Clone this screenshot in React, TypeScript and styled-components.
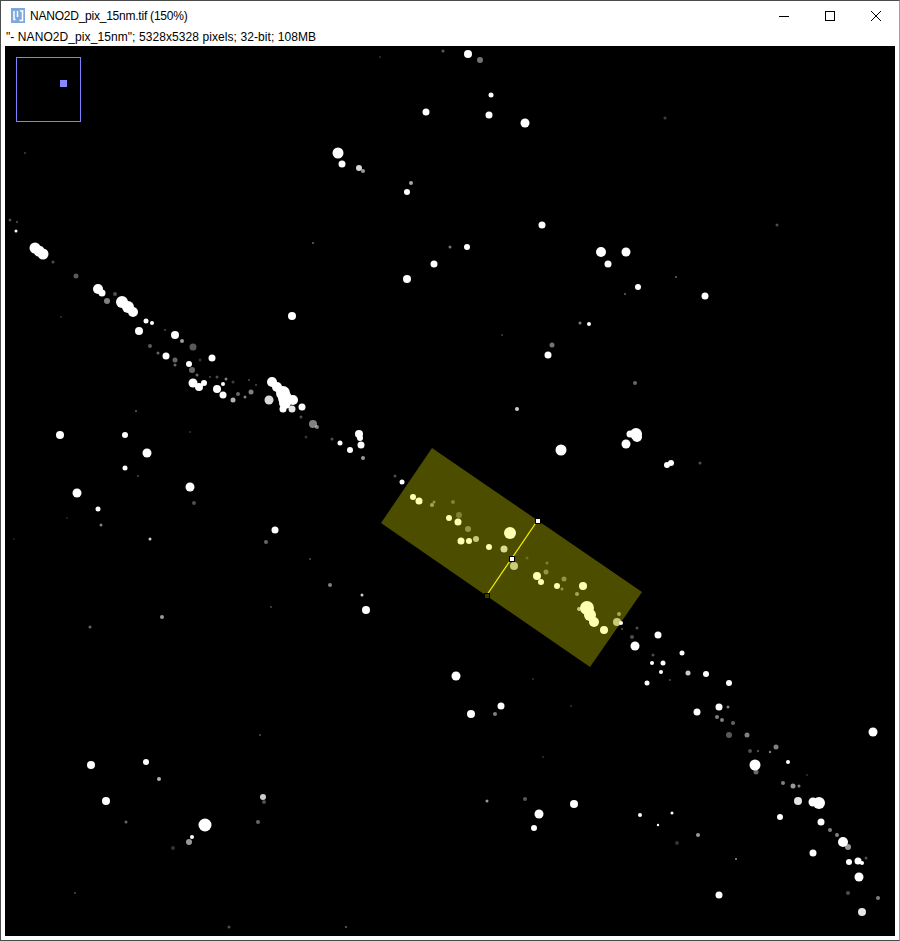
import styled, { createGlobalStyle } from 'styled-components';

const GlobalStyle = createGlobalStyle`
  html, body {
    margin: 0;
    padding: 0;
    background: #fff;
  }
`;

const Window = styled.div`
  box-sizing: border-box;
  width: 900px;
  height: 941px;
  display: flex;
  flex-direction: column;
  background: #fff;
  border: 1px solid #4c4c4c;
  border-right-color: #a0a0a0;
  font-family: 'Liberation Sans', Arial, sans-serif;
  color: #000;
  overflow: hidden;
`;

const TitleBar = styled.div`
  display: flex;
  align-items: center;
  height: 29px;
  flex: none;
`;

const AppIcon = styled.svg`
  width: 16px;
  height: 16px;
  margin: 0 4px 0 9px;
  flex: none;
`;

const Title = styled.div`
  flex: 1;
  font-size: 12px;
  letter-spacing: -0.23px;
  white-space: nowrap;
`;

const WindowButton = styled.div`
  width: 46px;
  height: 29px;
  display: flex;
  align-items: center;
  justify-content: center;
`;

const ButtonGlyph = styled.svg`
  width: 12px;
  height: 12px;
  stroke: #000;
  fill: none;
`;

const StatusLine = styled.div`
  flex: none;
  height: 16px;
  line-height: 15px;
  padding-left: 5px;
  font-size: 12px;
  letter-spacing: 0.08px;
  white-space: nowrap;
`;

const CanvasArea = styled.div`
  position: relative;
  flex: none;
  width: 890px;
  height: 890px;
  margin-left: 4px;
  background: #000;
`;

const ImageLayer = styled.svg`
  display: block;
  width: 890px;
  height: 890px;
`;

const Navigator = styled.div`
  position: absolute;
  left: 11px;
  top: 11px;
  box-sizing: border-box;
  width: 65px;
  height: 65px;
  border: 1px solid #8080ff;
`;

const NavigatorView = styled.div`
  position: absolute;
  left: 43px;
  top: 22px;
  width: 7px;
  height: 7px;
  background: #8888ff;
`;

// x, y, radius, brightness
type Spot = [number, number, number, number?];

const spots: Spot[] = [
  // top
  [468, 54, 4], [480, 60, 3, 0.45], [443, 51, 1.5, 0.35], [491, 95, 2.5], [426, 112, 3.5], [489, 115, 3.5],
  [525, 123, 4.5], [338, 153, 5.5], [342, 164, 3.5], [359, 168, 3, 0.85], [363, 171, 2, 0.6], [411, 183, 2, 0.65],
  [407, 192, 3], [542, 225, 3.5], [467, 247, 3], [450, 247, 1.5, 0.45], [434, 264, 3.5], [407, 279, 4],
  [313, 243, 1, 0.4], [380, 57, 1, 0.2],
  // top right
  [601, 252, 5], [626, 252, 4.5], [608, 264, 3.5], [638, 287, 3], [705, 296, 3.5], [625, 294, 1, 0.4],
  [676, 277, 1, 0.4], [777, 225, 1.5, 0.3], [589, 324, 2], [580, 323, 1.5, 0.5], [548, 355, 3.5], [552, 345, 2.5, 0.45],
  [635, 383, 2, 0.4], [517, 409, 2, 0.8], [561, 450, 5.5], [626, 444, 4.5], [630, 434, 3.5], [636, 434, 6],
  [637, 437, 5], [671, 463, 3], [667, 465, 3], [700, 463, 1.5, 0.3], [502, 335, 1, 0.25], [665, 118, 1.5, 0.25],
  // left streak
  [16, 231, 1.5], [10, 220, 1.5, 0.3], [17, 222, 1.2, 0.25], [35, 248, 5.5], [39, 251, 5.5], [43, 254, 5.5], [53, 262, 1.5, 0.3],
  [76, 276, 2.5, 0.35], [98, 289, 5], [102, 293, 3.5], [107, 301, 3, 0.5], [115, 294, 2, 0.3], [122, 302, 6],
  [128, 307, 6], [133, 312, 5], [146, 321, 2.5], [152, 323, 2], [139, 331, 4], [165, 330, 1, 0.3],
  [175, 335, 4], [182, 341, 2, 0.6], [193, 347, 3.5, 0.35], [150, 346, 2, 0.35], [158, 353, 1.5, 0.4], [166, 356, 3.5],
  [175, 360, 2.5, 0.4], [175, 365, 1.5, 0.4], [189, 364, 3], [212, 358, 3.5], [200, 360, 1.5, 0.2], [192, 370, 3, 0.4],
  [197, 375, 1.5, 0.4], [193, 383, 4.5], [199, 387, 4], [204, 383, 3], [217, 389, 4], [223, 395, 3.5],
  [223, 384, 2], [226, 379, 1.5, 0.5], [217, 377, 1.5, 0.3], [210, 377, 1, 0.3], [233, 400, 2.5, 0.7], [238, 394, 2, 0.4],
  [245, 397, 1.5, 0.5], [251, 392, 2.5, 0.5], [233, 382, 1.5, 0.25], [249, 380, 1, 0.3], [256, 385, 1, 0.3],
  [272, 382, 5], [277, 387, 5], [269, 400, 4.5, 0.85], [283, 393, 7], [285, 398, 7], [285, 403, 6], [293, 400, 5],
  [292, 409, 3.5, 0.9], [302, 407, 3.5], [283, 409, 3.5], [301, 417, 1.5, 0.3], [313, 424, 4, 0.5], [317, 427, 2, 0.5],
  [340, 443, 2.5], [332, 439, 1.5, 0.3], [306, 437, 1.5, 0.2], [350, 450, 3], [359, 434, 4], [360, 438, 3],
  [361, 445, 3.5], [363, 458, 2, 0.6], [292, 316, 4], [136, 411, 1, 0.4], [190, 432, 1, 0.2], [61, 317, 1, 0.2],
  [25, 153, 1, 0.25],
  // left middle
  [60, 435, 4], [125, 435, 3], [147, 453, 4.5], [125, 468, 2.5], [77, 493, 4.5], [98, 509, 2.5],
  [101, 525, 1.5, 0.5], [150, 539, 1.5, 0.8], [138, 476, 1, 0.3], [190, 487, 4.5], [194, 503, 2, 0.3], [275, 530, 3.5],
  [266, 542, 2, 0.4], [310, 559, 1, 0.3], [330, 585, 2, 0.5], [362, 595, 1.5, 0.8], [366, 610, 4], [271, 607, 1, 0.3],
  [162, 617, 2, 0.6], [90, 627, 1.5, 0.4], [67, 518, 1, 0.15], [14, 539, 0.8, 0.2],
  // bottom left
  [91, 765, 4], [106, 801, 4], [146, 762, 3], [159, 779, 2, 0.7], [126, 822, 1.5, 0.4], [205, 825, 6.5],
  [192, 837, 2], [189, 842, 3, 0.6], [173, 848, 2, 0.2], [263, 797, 3, 0.8], [264, 802, 2, 0.3], [258, 822, 2, 0.4],
  [75, 893, 1, 0.3], [229, 927, 1.5, 0.3], [346, 927, 1, 0.4], [260, 735, 1, 0.3],
  // bottom middle
  [456, 676, 4.5], [471, 714, 4], [501, 706, 3.5], [495, 714, 2, 0.5], [487, 801, 1.5, 0.6], [525, 799, 2, 0.35],
  [539, 814, 4.5], [534, 828, 3], [574, 804, 4], [543, 757, 1, 0.2], [571, 706, 1, 0.2], [533, 679, 1, 0.2],
  // right streak
  [635, 646, 4.5], [658, 635, 3.5], [682, 653, 2.5], [652, 663, 2], [663, 663, 2.5], [661, 672, 2],
  [688, 673, 2.5, 0.8], [706, 674, 3], [647, 683, 2.5], [729, 683, 3], [670, 680, 1, 0.3], [653, 655, 1.5, 0.3],
  [697, 712, 3.5], [719, 707, 3.5], [728, 707, 1.5, 0.5], [717, 717, 2, 0.5], [722, 720, 2, 0.5], [733, 723, 2, 0.4],
  [729, 735, 3, 0.35], [747, 735, 2.5, 0.5], [750, 751, 2, 0.3], [758, 751, 1.2, 0.3], [776, 747, 2.5, 0.5], [770, 752, 1.2, 0.5],
  [788, 762, 2], [755, 765, 5.5], [756, 772, 2.5, 0.4], [783, 783, 2, 0.5], [793, 786, 2.5, 0.6], [799, 786, 1.5, 0.5],
  [807, 775, 1, 0.2], [798, 801, 4, 0.9], [813, 802, 4.5], [819, 803, 6], [821, 822, 3.5], [830, 830, 2, 0.5],
  [837, 835, 2, 0.5], [843, 842, 5], [848, 847, 3, 0.6], [813, 853, 3.5], [849, 862, 3], [858, 861, 3.5],
  [862, 863, 2], [866, 858, 1.5, 0.3], [859, 877, 4.5], [873, 732, 4.5], [780, 817, 3], [640, 815, 2],
  [672, 813, 1.5], [658, 825, 1.2], [698, 835, 2, 0.6], [677, 843, 2, 0.2], [736, 859, 1, 0.6], [719, 895, 3.5],
  [848, 893, 2, 0.3], [878, 898, 2, 0.5], [862, 912, 4, 0.9], [632, 637, 2, 0.3], [637, 628, 1.5, 0.3], [622, 629, 1, 0.3],
  // inside the selection
  [402, 482, 2.5], [395, 476, 1.5, 0.3], [413, 497, 3], [419, 501, 3.5], [432, 505, 2, 0.5], [434, 502, 1.5, 0.4],
  [453, 502, 2, 0.3], [449, 518, 3], [458, 522, 3.5], [459, 515, 3, 0.3], [468, 529, 3, 0.4], [461, 541, 3.5],
  [469, 541, 3], [476, 539, 3, 0.7], [510, 533, 6], [489, 547, 3], [504, 549, 3.5, 0.8], [514, 566, 4, 0.7],
  [527, 558, 1.5, 0.2], [547, 563, 1.5, 0.3], [546, 572, 2.5, 0.4], [537, 576, 4], [541, 582, 3], [564, 579, 2.5, 0.4],
  [557, 586, 3], [562, 589, 1.5, 0.4], [583, 586, 4], [577, 594, 2, 0.5], [587, 608, 7], [590, 615, 6],
  [594, 622, 5], [579, 609, 2, 0.7], [604, 630, 4], [619, 614, 2, 0.5], [617, 622, 4, 0.7], [621, 623, 2],
];

const App = () => {
  return (
    <>
      <GlobalStyle />
      <Window>
        <TitleBar>
          <AppIcon viewBox="0 0 16 16">
            <rect x="1" y="0" width="14" height="15" fill="#7fa8da" />
            <path d="M4 3v8.5h1.5M7.5 3v6M10 3h3.5M12.5 3v9.5h-3" stroke="#fff" strokeWidth="1.5" fill="none" />
          </AppIcon>
          <Title>NANO2D_pix_15nm.tif (150%)</Title>
          <WindowButton>
            <ButtonGlyph viewBox="0 0 12 12">
              <path d="M1 6.5h10" />
            </ButtonGlyph>
          </WindowButton>
          <WindowButton>
            <ButtonGlyph viewBox="0 0 12 12">
              <rect x="1.5" y="1.5" width="9" height="9" />
            </ButtonGlyph>
          </WindowButton>
          <WindowButton>
            <ButtonGlyph viewBox="0 0 12 12">
              <path d="M1 1l10 10M11 1L1 11" />
            </ButtonGlyph>
          </WindowButton>
        </TitleBar>
        <StatusLine>"- NANO2D_pix_15nm"; 5328x5328 pixels; 32-bit; 108MB</StatusLine>
        <CanvasArea>
          <ImageLayer viewBox="5 46 890 890">
            <defs>
              <filter id="soft" x="-2%" y="-2%" width="104%" height="104%">
                <feGaussianBlur stdDeviation="0.7" />
              </filter>
            </defs>
            <g filter="url(#soft)">
              {spots.map(([x, y, r, level], i) => (
                <circle key={i} cx={x} cy={y} r={r} fill="#fff" fillOpacity={level ?? 1} />
              ))}
            </g>
            <polygon points="432,448 642,592 590,667 381,523" fill="#ffff00" fillOpacity="0.3" />
            <line x1="537.5" y1="520.5" x2="486.5" y2="595.5" stroke="#eeee00" strokeWidth="1.3" />
            <rect x="535.5" y="518.5" width="5" height="5" fill="#fff" stroke="#000" />
            <rect x="509.5" y="556.5" width="5" height="5" fill="#fff" stroke="#000" />
            <rect x="484.5" y="593.5" width="5" height="5" fill="#3d3a00" stroke="#000" />
          </ImageLayer>
          <Navigator>
            <NavigatorView />
          </Navigator>
        </CanvasArea>
      </Window>
    </>
  );
};

export default App;
